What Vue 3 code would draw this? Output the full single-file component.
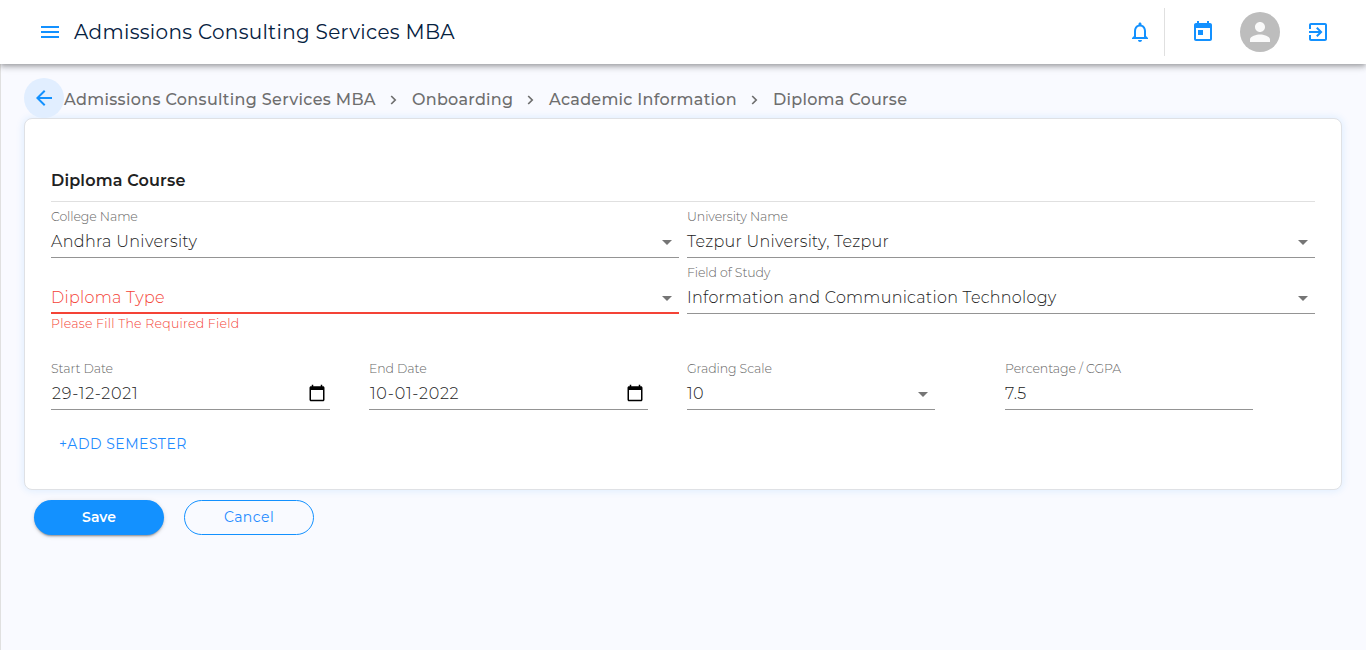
<script setup>
const crumbs = [
  { text: 'Admissions Consulting Services MBA', cls: 'c1' },
  { text: 'Onboarding', cls: 'c2' },
  { text: 'Academic Information', cls: 'c3' },
  { text: 'Diploma Course', cls: 'c4' },
]
const selects = [
  { label: 'College Name', value: 'Andhra University', cls: 'college' },
  { label: 'University Name', value: 'Tezpur University, Tezpur', cls: 'university' },
  { label: '', value: 'Diploma Type', cls: 'diploma error', help: 'Please Fill The Required Field' },
  { label: 'Field of Study', value: 'Information and Communication Technology', cls: 'study' },
]
const details = [
  { label: 'Start Date', value: '29-12-2021', cls: 'start date', icon: 'date' },
  { label: 'End Date', value: '10-01-2022', cls: 'end date', icon: 'date' },
  { label: 'Grading Scale', value: '10', cls: 'scale short', icon: 'arrow' },
  { label: 'Percentage / CGPA', value: '7.5', cls: 'cgpa short' },
]
</script>

<template>
  <div class="page">
    <header class="bar">
      <svg class="menu" viewBox="0 0 24 24"><path d="M3 18h18v-2H3v2zm0-5h18v-2H3v2zm0-7v2h18V6H3z" /></svg>
      <h1>Admissions Consulting Services MBA</h1>
      <div class="tools">
        <div class="bell">
          <svg viewBox="0 0 24 24"><path d="M12 22c1.1 0 2-.9 2-2h-4c0 1.1.9 2 2 2zm6-6v-5c0-3.07-1.63-5.64-4.5-6.32V4c0-.83-.67-1.5-1.5-1.5s-1.5.67-1.5 1.5v.68C7.64 5.36 6 7.92 6 11v5l-2 2v1h16v-1l-2-2zm-2 1H8v-6c0-2.48 1.51-4.5 4-4.5s4 2.02 4 4.5v6z" /></svg>
        </div>
        <svg class="cal" viewBox="0 0 24 24"><path d="M19 3h-1V1h-2v2H8V1H6v2H5c-1.11 0-1.99.9-1.99 2L3 19c0 1.1.89 2 2 2h14c1.1 0 2-.9 2-2V5c0-1.1-.9-2-2-2zm0 16H5V8h14v11zM7 10h5v5H7z" /></svg>
        <div class="avatar">
          <svg viewBox="0 0 24 24"><path d="M12 12c2.21 0 4-1.79 4-4s-1.79-4-4-4-4 1.79-4 4 1.79 4 4 4zm0 2c-2.67 0-8 1.34-8 4v2h16v-2c0-2.66-5.33-4-8-4z" /></svg>
        </div>
        <svg class="exit" viewBox="0 0 24 24"><path d="M10.09 15.59L11.5 17l5-5-5-5-1.41 1.41L12.67 11H3v2h9.67l-2.58 2.59zM19 3H5c-1.11 0-2 .9-2 2v4h2V5h14v14H5v-4H3v4c0 1.1.89 2 2 2h14c1.1 0 2-.9 2-2V5c0-1.1-.9-2-2-2z" /></svg>
      </div>
    </header>

    <main class="content">
      <nav class="crumbs">
        <button class="back">
          <svg viewBox="0 0 24 24"><path d="M20 11H7.83l5.59-5.59L12 4l-8 8 8 8 1.41-1.41L7.83 13H20v-2z" /></svg>
        </button>
        <template v-for="(c, i) in crumbs" :key="c.text">
          <svg v-if="i" class="chev" viewBox="0 0 8 10"><path d="M2.2 1l4 4-4 4" /></svg>
          <span class="crumb" :class="c.cls">{{ c.text }}</span>
        </template>
      </nav>

      <section class="card">
        <h2>Diploma Course</h2>
        <div class="grid two">
          <div v-for="f in selects" :key="f.value" class="field" :class="f.cls">
            <label>{{ f.label }}</label>
            <div class="control">
              <span class="value">{{ f.value }}</span>
              <svg class="arrow" viewBox="0 0 24 24"><path d="M7 10l5 5 5-5z" /></svg>
            </div>
            <p v-if="f.help" class="help">{{ f.help }}</p>
          </div>
        </div>
        <div class="grid four">
          <div v-for="f in details" :key="f.label" class="field" :class="f.cls">
            <label>{{ f.label }}</label>
            <div class="control">
              <span class="value">{{ f.value }}</span>
              <svg v-if="f.icon === 'arrow'" class="arrow" viewBox="0 0 24 24"><path d="M7 10l5 5 5-5z" /></svg>
              <svg v-if="f.icon === 'date'" class="picker" viewBox="0 0 24 24"><path d="M20 3h-1V1h-2v2H7V1H5v2H4c-1.1 0-2 .9-2 2v16c0 1.1.9 2 2 2h16c1.1 0 2-.9 2-2V5c0-1.1-.9-2-2-2zm0 18H4V8h16v13z" /></svg>
            </div>
          </div>
        </div>
        <button class="add">+ADD SEMESTER</button>
      </section>

      <div class="actions">
        <button class="btn save">Save</button>
        <button class="btn cancel">Cancel</button>
      </div>
    </main>
  </div>
</template>

<style>
body {
  margin: 0;
  background: #f9faff;
}
</style>

<style scoped>
* {
  box-sizing: border-box;
}
.page {
  height: 650px;
  overflow: hidden;
  display: flex;
  flex-direction: column;
  font-family: Montserrat, Inter, sans-serif;
  font-size: 16px;
  color: #212121;
}
svg {
  display: block;
  flex: none;
  fill: currentColor;
}
h1,
h2,
p {
  margin: 0;
}
button {
  font: inherit;
  border: 0;
  padding: 0;
  background: none;
}
.bar {
  position: relative;
  z-index: 1;
  flex: none;
  height: 64px;
  padding: 0 36px 0 38px;
  display: flex;
  align-items: center;
  background: #fff;
  color: #1391ff;
  box-shadow: 0 2px 4px -1px rgba(0, 0, 0, .2), 0 4px 5px rgba(0, 0, 0, .14), 0 1px 10px rgba(0, 0, 0, .12);
}
.menu {
  width: 24px;
  height: 24px;
}
h1 {
  margin-left: 12px;
  font-size: 20px;
  line-height: 32px;
  font-weight: 450;
  letter-spacing: .32px;
  color: #05213f;
}
.tools {
  margin-left: auto;
  display: flex;
  align-items: center;
}
.tools svg {
  width: 24px;
  height: 24px;
}
.bell {
  height: 48px;
  padding-right: 12px;
  border-right: 1px solid #e0e0e0;
  display: flex;
  align-items: center;
}
.cal {
  margin-left: 26px;
}
.avatar {
  width: 40px;
  height: 40px;
  margin: 0 26px 0 25px;
  border-radius: 50%;
  background: #bdbdbd;
  color: #fafafa;
  display: flex;
  align-items: center;
  justify-content: center;
}
.tools .avatar svg {
  width: 30px;
  height: 30px;
}
.content {
  flex: 1;
  padding: 14px 24px 0 23px;
  border-left: 1px solid #e0e0e0;
  background: #f9faff;
}
.crumbs {
  height: 40px;
  display: flex;
  align-items: center;
  color: #6e6e6e;
}
.back {
  width: 40px;
  height: 40px;
  border-radius: 50%;
  background: #e1eeff;
  color: #1391ff;
  display: flex;
  align-items: center;
  justify-content: center;
}
.back svg {
  width: 24px;
  height: 24px;
}
.crumb {
  font-weight: 500;
  line-height: 24px;
  padding-top: 3px;
  letter-spacing: .33px;
  white-space: nowrap;
}
.c1 {
  width: 312px;
}
.c2 {
  width: 101px;
  letter-spacing: .27px;
}
.c3 {
  width: 188px;
  letter-spacing: .27px;
}
.c4 {
  letter-spacing: .27px;
}
.chev {
  width: 8px;
  height: 10px;
  margin: 4px 15px 0 13px;
  fill: none;
  stroke: currentColor;
  stroke-width: 1.7;
}
.card {
  height: 372px;
  padding: 49px 26px 0;
  background: #fff;
  border: 1px solid #dfe1e5;
  border-radius: 8px;
  box-shadow: 0 0 8px rgba(19, 145, 255, .14);
}
h2 {
  height: 34px;
  padding-top: 1px;
  border-bottom: 1px solid #e0e0e0;
  font-size: 16px;
  font-weight: 600;
  line-height: 24px;
  letter-spacing: .18px;
}
.grid {
  display: grid;
}
.two {
  grid-template-columns: 1fr 1fr;
  gap: 8px;
  padding-top: 8px;
}
.four {
  grid-template-columns: repeat(4, 1fr);
  gap: 0 8px;
  margin-top: 48px;
}
.four .field {
  width: 279px;
}
.four .short {
  width: 248px;
}
.field {
  position: relative;
  height: 48px;
}
label {
  display: block;
  height: 16px;
  font-size: 12.5px;
  line-height: 14px;
  font-weight: 300;
  letter-spacing: -.08px;
  color: #666;
  white-space: nowrap;
}
.control {
  height: 32px;
  display: flex;
  align-items: center;
  justify-content: space-between;
  border-bottom: 1px solid #949494;
}
.value {
  font-weight: 300;
  line-height: 30px;
  letter-spacing: .27px;
  white-space: nowrap;
}
.college .value {
  letter-spacing: .35px;
}
.arrow {
  width: 24px;
  height: 24px;
  color: #757575;
}
.date .value {
  padding-left: 1px;
  letter-spacing: .72px;
}
.picker {
  width: 18px;
  height: 18px;
  margin: 0 4px 1px 0;
  color: #000;
}
.error .control {
  padding-top: 1px;
  border-bottom: 2px solid #f44336;
}
.error .value,
.help {
  color: #f44336;
}
.help {
  position: absolute;
  top: 51px;
  left: 0;
  font-size: 12.5px;
  line-height: 14px;
  font-weight: 300;
  letter-spacing: .24px;
  white-space: nowrap;
}
.add {
  display: block;
  margin: 22px 0 0 8px;
  font-size: 14px;
  line-height: 24px;
  letter-spacing: .5px;
  color: #1f8bff;
}
.actions {
  display: flex;
  gap: 20px;
  padding: 10px 10px 0;
}
.btn {
  width: 130px;
  height: 35px;
  border-radius: 18px;
  font-size: 14px;
  line-height: 33px;
}
.save {
  background: #1391ff;
  color: #fff;
  font-weight: 600;
  box-shadow: 0 3px 1px -2px rgba(0, 0, 0, .2), 0 2px 2px rgba(0, 0, 0, .14), 0 1px 5px rgba(0, 0, 0, .12);
}
.cancel {
  border: 1px solid #1391ff;
  color: #1f8bff;
  letter-spacing: .45px;
}
</style>
